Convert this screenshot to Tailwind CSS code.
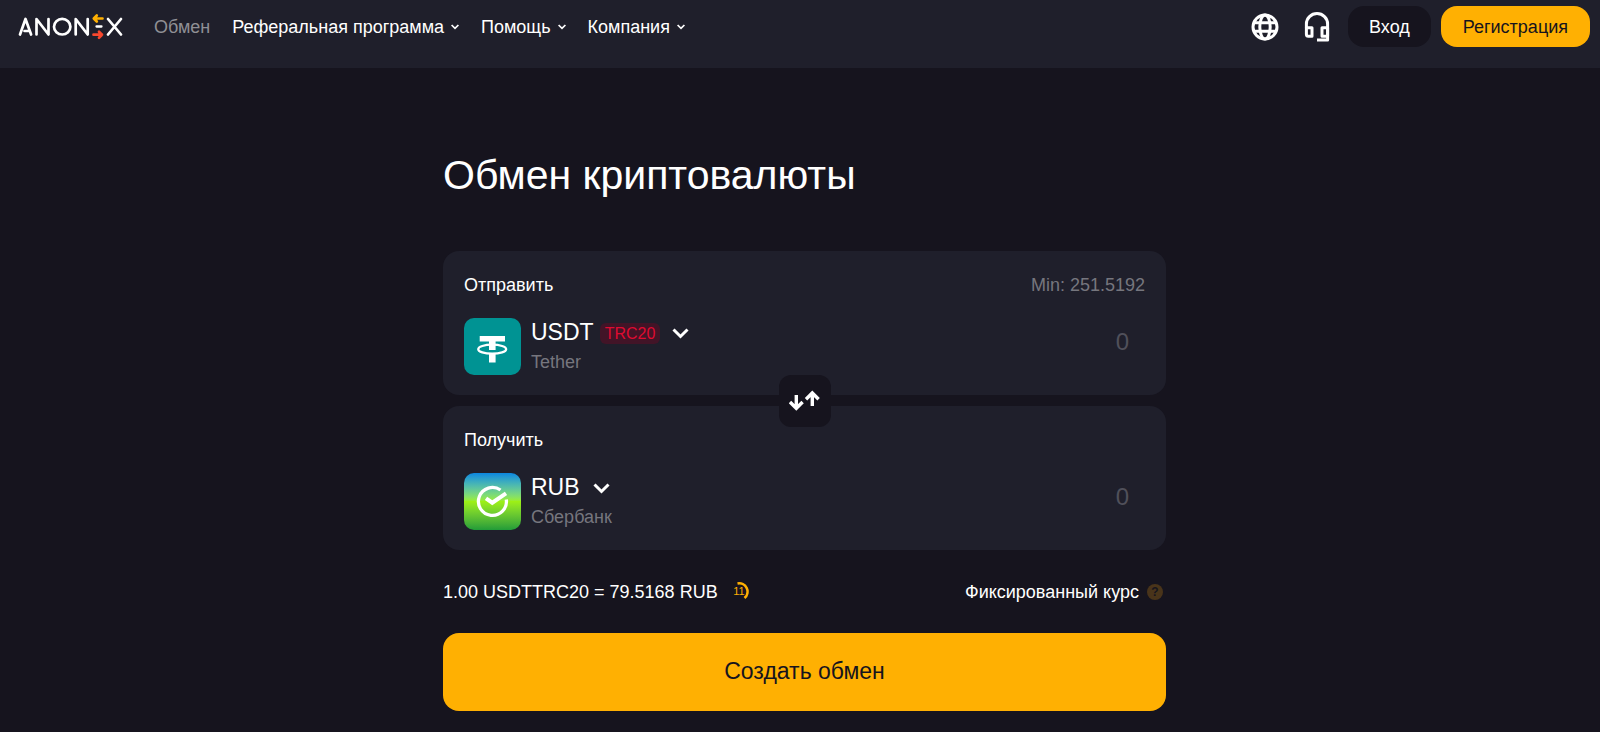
<!DOCTYPE html>
<html lang="ru">
  <head>
    <meta charset="UTF-8" />
    <meta name="viewport" content="width=device-width, initial-scale=1.0" />
    <title>ANONEX - Обмен криптовалюты</title>
    <script src="https://cdn.jsdelivr.net/npm/@tailwindcss/browser@4"></script>
  </head>
  <body class="bg-[#16141e] font-['Liberation_Sans',Arial,sans-serif] text-lg text-white">
    <div class="min-h-screen">
      <!-- Header -->
      <header class="flex h-[68px] items-start justify-between bg-[#1f1f2b] pt-[6px] pr-[10px] pl-[18px]">
        <div class="flex h-[41px] items-center">
          <a href="#" aria-label="ANONEX" class="mr-[31px]">
            <svg class="h-[28px] w-[105px]" viewBox="0 0 105 28" fill="none" stroke="#fff" stroke-width="2.7" stroke-linecap="round" stroke-linejoin="round">
              <path d="M2 21.500 7.500 6l5.600 15.500M6.500 18h5" />
              <path d="M18.500 21.500V6L30.500 21.500V6" />
              <ellipse cx="44.200" cy="13.700" rx="8.200" ry="7.800" />
              <path d="M57.700 21.500V6l12 15.500V6" />
              <path d="M78.500 13.500h5" stroke-width="2.300" />
              <path d="M90 6l13 15.500M103 6 90 21.500" />
              <path d="M76 5.500h8.500M78.800 2.500l-3 3 3 3" stroke="#ffb002" />
              <path d="M75.500 21.700H84M81 18.700l3 3-3 3" stroke="#f8482e" />
            </svg>
          </a>
          <nav class="flex items-center gap-[22px]">
            <a href="#" class="text-[#8f8f95]">Обмен</a>
            <button class="flex items-center gap-[7px]">
              Реферальная программа
              <svg class="h-[6px] w-[8px]" viewBox="0 0 8 6" fill="none" stroke="currentColor" stroke-width="1.700"><path d="M.6 1 4 4.400 7.400 1" /></svg>
            </button>
            <button class="flex items-center gap-[7px]">
              Помощь
              <svg class="h-[6px] w-[8px]" viewBox="0 0 8 6" fill="none" stroke="currentColor" stroke-width="1.700"><path d="M.6 1 4 4.400 7.400 1" /></svg>
            </button>
            <button class="flex items-center gap-[7px]">
              Компания
              <svg class="h-[6px] w-[8px]" viewBox="0 0 8 6" fill="none" stroke="currentColor" stroke-width="1.700"><path d="M.6 1 4 4.400 7.400 1" /></svg>
            </button>
          </nav>
        </div>

        <div class="flex items-center">
          <button aria-label="Язык" class="mr-[25px]">
            <svg class="size-[28px]" viewBox="0 0 28 28" fill="none" stroke="#fff" stroke-width="3">
              <circle cx="14" cy="14" r="12" />
              <ellipse cx="14" cy="14" rx="5.200" ry="12" />
              <path d="M3 9.800h22M3 18.200h22" />
            </svg>
          </button>
          <button aria-label="Поддержка" class="mr-[18px]">
            <svg class="h-[30px] w-[26px]" viewBox="0 0 26 30" fill="none" stroke="#fff" stroke-width="3" stroke-linejoin="round">
              <path d="M2.400 16V12a10.600 10.400 0 0 1 21.200 0V28H13" />
              <path d="M2.400 15.700H8v8.600H4.400a2 2 0 0 1-2-2zM23.600 15.700H18v8.600h5.600z" />
            </svg>
          </button>
          <button class="mr-[10px] h-[41px] rounded-2xl bg-[#16141e] px-[21px]">Вход</button>
          <button class="h-[41px] rounded-2xl bg-[#ffb002] px-[22px] text-[#16141e]">Регистрация</button>
        </div>
      </header>

      <!-- Exchange form -->
      <main class="pr-4 pl-[25px]">
        <form class="mx-auto w-full max-w-[723px] pt-[80px]">
          <h1 class="mb-[49px] text-[41px] leading-[54px]">Обмен криптовалюты</h1>

          <div class="relative grid gap-[11px]">
            <section class="h-[144px] rounded-2xl bg-[#1f1f2b] px-[21px] pt-[20px]">
              <div class="flex h-[28px] items-center justify-between">
                <label for="send">Отправить</label>
                <span class="text-[#76767e]">Min: 251.5192</span>
              </div>
              <div class="mt-[19px] flex items-start justify-between">
                <button type="button" class="flex items-start gap-[10px] text-left">
                  <svg class="size-[57px] rounded-[10px] bg-[#009393]" viewBox="0 0 57 57" fill="#fff">
                    <path d="M15.700 18H41v5.600h-9.400V32H25v-8.400h-9.300zM25 36h6.600v8.400H25z" />
                    <ellipse cx="28.200" cy="31.200" rx="14" ry="4.500" fill="none" stroke="#fff" stroke-width="2.200" />
                  </svg>
                  <span class="block">
                    <span class="flex h-[30px] items-center text-[23px]">
                      USDT
                      <span class="ml-[6px] h-[21px] rounded-[6px] bg-[#421427] px-[5px] text-base leading-[22px] text-[#df0b31]">TRC20</span>
                      <svg class="ml-[12px] h-[11px] w-[17px]" viewBox="0 0 17 11" fill="none" stroke="#fff" stroke-width="3"><path d="m1.500 1.500 7 7 7-7" /></svg>
                    </span>
                    <span class="block leading-[28px] text-[#76767e]">Tether</span>
                  </span>
                </button>
                <input id="send" type="text" placeholder="0" class="h-[48px] w-[300px] bg-transparent pr-[16px] text-right text-2xl outline-none placeholder:text-[#50505a]" />
              </div>
            </section>

            <section class="h-[144px] rounded-2xl bg-[#1f1f2b] px-[21px] pt-[20px]">
              <div class="flex h-[28px] items-center justify-between">
                <label for="receive">Получить</label>
              </div>
              <div class="mt-[19px] flex items-start justify-between">
                <button type="button" class="flex items-start gap-[10px] text-left">
                  <svg class="size-[57px] rounded-[10px] bg-linear-to-b from-[#0b87e0] via-[#9df015] to-[#1f9c38]" viewBox="0 0 57 57" fill="none" stroke="#fff" stroke-width="3.300">
                    <path d="M36.500 17A14 14 0 1 0 42.300 26.500" />
                    <path d="M22 25.300 28.300 29.700 42 20.300" stroke-width="4" />
                  </svg>
                  <span class="block">
                    <span class="flex h-[30px] items-center text-[23px]">
                      RUB
                      <svg class="ml-[13px] h-[11px] w-[17px]" viewBox="0 0 17 11" fill="none" stroke="#fff" stroke-width="3"><path d="m1.500 1.500 7 7 7-7" /></svg>
                    </span>
                    <span class="block leading-[28px] text-[#76767e]">Сбербанк</span>
                  </span>
                </button>
                <input id="receive" type="text" placeholder="0" class="h-[48px] w-[300px] bg-transparent pr-[16px] text-right text-2xl outline-none placeholder:text-[#50505a]" />
              </div>
            </section>

            <!-- Swap button sits over both cards -->
            <button type="button" aria-label="Поменять местами" class="absolute top-1/2 left-1/2 flex size-[52px] -translate-1/2 items-center justify-center rounded-xl bg-[#16141e]">
              <svg class="h-[22px] w-[32px]" viewBox="0 0 32 22" fill="none" stroke="#fff" stroke-width="3.400">
                <path d="M7.300 5v14M1 12l6.300 6.300L13.600 12M23.300 16V3M17 9.300 23.300 3l6.300 6.300" />
              </svg>
            </button>
          </div>

          <div class="mt-[28px] flex h-[28px] items-center justify-between">
            <p class="flex items-center">
              1.00 USDTTRC20 = 79.5168 RUB
              <svg class="ml-[14px] size-[20px]" viewBox="0 0 20 20" fill="none">
                <path d="M5.500 1.500a8.300 8.300 0 0 1 7 14.500" stroke="#ffb002" stroke-width="2.600" />
                <text x="7" y="13" text-anchor="middle" fill="#ffb002" font-size="11">11</text>
              </svg>
            </p>
            <p class="flex items-center gap-[8px] pr-[3px]">
              Фиксированный курс
              <button type="button" aria-label="Подробнее о курсе" class="size-[16px] rounded-full bg-[#49341a] text-xs leading-[16px] font-bold text-[#16141e]">?</button>
            </p>
          </div>

          <button type="submit" class="mt-[27px] h-[78px] w-full rounded-2xl bg-[#ffb002] text-[23px] text-[#16141e]">Создать обмен</button>
        </form>
      </main>
    </div>
  </body>
</html>
